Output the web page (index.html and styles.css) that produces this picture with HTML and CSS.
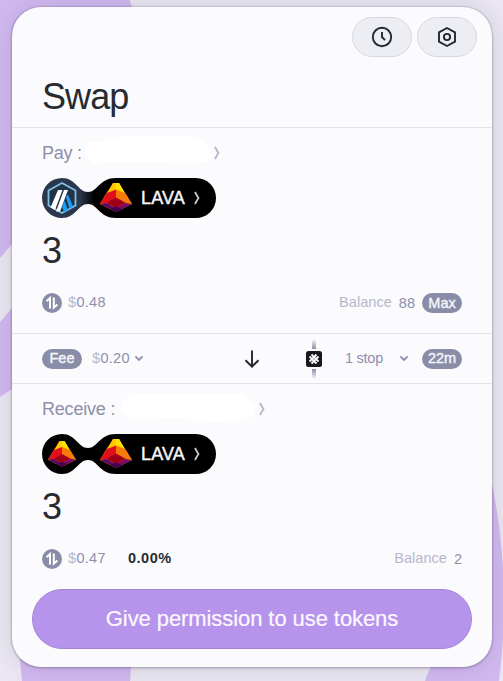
FILE: index.html
```html
<!DOCTYPE html>
<html lang="en">
<head>
<meta charset="utf-8">
<title>Swap</title>
<link rel="stylesheet" href="styles.css">
</head>
<body>
<svg class="backdrop" width="503" height="681" viewBox="0 0 503 681" aria-hidden="true">
  <path d="M0 0H130Q145 50 120 100L12 244L0 258ZM0 322L12 308L80 240V340L12 389L0 397ZM18 640Q20 660 22 681H130L133 640ZM489 470C505 540 508 610 499 681H425Q440 640 460 600Z" fill="#d2baf1"/>
</svg>
<svg width="0" height="0" class="defs" aria-hidden="true">
  <symbol id="lava" viewBox="0 0 32 29">
    <path d="M13 0H19L32 21 16 29 0 21Z" fill="#ff9a00"/>
    <path d="M13 0H19L25 11 16 7.5 7 11Z" fill="#ffc800"/>
    <path d="M15 0H19L25 11 16 7.5Z" fill="#ffe100"/>
    <path d="M8.5 7 7 11 0 21 8 7.5Z" fill="#ff6a00"/>
    <path d="M7 10 16 6.5V16L6 20 0 21Z" fill="#e2101c"/>
    <path d="M16 6.5 25 10 32 21 26 20 16 16Z" fill="#f57c0c"/>
    <path d="M16 14.5 26 20 16 25 6 20Z" fill="#a10018"/>
    <path d="M0 21 6 20 16 25V29Z" fill="#5c0864"/>
    <path d="M32 21 26 20 16 25V29Z" fill="#75096e"/>
    <path d="M16 23.5 22 26 16 29 10 26Z" fill="#45004f"/>
  </symbol>
  <symbol id="swap" viewBox="0 0 20 20">
    <circle cx="10" cy="10" r="10" fill="#8a8da8"/>
    <path d="M4.5 8.3 8 5.1V15.5M11.8 4.5V14.6L15.4 11.4" fill="none" stroke="#fff" stroke-width="2"/>
  </symbol>
  <symbol id="angle" viewBox="0 0 6 14"><path d="M1 1Q2.5 4 4.5 7Q2.5 10 1 13" fill="none" stroke="currentColor" stroke-width="1.8"/></symbol>
  <symbol id="down" viewBox="0 0 8 6"><path d="M1 1 4 4 7 1" fill="none" stroke="#8f91ad" stroke-width="1.8" stroke-linecap="round"/></symbol>
</svg>
<main class="card">
  <header class="header">
    <div class="tools">
      <button class="tool" aria-label="History"><svg width="22" height="22" viewBox="0 0 22 22"><circle cx="11" cy="11" r="9.2"/><path d="M11 6v5l3 3.2"/></svg></button>
      <button class="tool" aria-label="Settings"><svg width="22" height="22" viewBox="0 0 22 22"><path d="M11 2 19 6.3V15.7L11 20 3 15.7V6.3Z"/><circle cx="11" cy="11" r="3.1"/></svg></button>
    </div>
    <h1 class="title">Swap</h1>
  </header>

  <section class="side">
    <div class="account"><span class="pay-label">Pay :</span>
      <svg class="pay-blank" width="131" height="30" viewBox="0 0 131 30"><path d="M4 9Q9 4 19 8Q30 0 48 1H105Q119 3 124 10Q131 14 129 24Q128 28 120 26L22 27Q9 32 8 24Q0 16 4 9Z" fill="#fff"/></svg>
      <svg class="angle" width="6" height="14"><use href="#angle"/></svg></div>
    <button class="token">
      <svg class="shape" width="174" height="40" viewBox="0 0 174 40">
        <defs><linearGradient id="chain"><stop offset=".16" stop-color="#2b374c"/><stop offset=".22" stop-color="#2b374c"/><stop offset=".3" stop-color="#000"/></linearGradient></defs>
        <path d="M20 0C34 0 36 14 46 14S57 0 74 0H154A20 20 0 0 1 154 40H74C57 40 56 26 46 26S34 40 20 40A20 20 0 0 1 20 0Z" fill="url(#chain)"/>
        <path d="M20 5 33.5 12.5V27.5L20 35 6.5 27.5V12.5Z" fill="#203349" stroke="#83bfe0" stroke-width="1.8"/>
        <path d="M16 12H20.5L13 32 8.5 29.5ZM22 12H26L18 33.5H14Z" fill="#fff"/>
        <path d="M24 19 26 16.5 31 28.5 27.5 31ZM22.5 22.5 26 32 22 34 20 29Z" fill="#1b9df5"/>
        <use href="#lava" x="58" y="5" width="32" height="29"/>
      </svg>
      <span class="symbol">LAVA</span><svg class="token-angle" width="6" height="14"><use href="#angle"/></svg>
    </button>
    <div class="amount">3</div>
    <div class="stats"><svg class="swap" width="20" height="20"><use href="#swap"/></svg><span class="usd"><i>$</i>0.48</span>
      <span class="balance">Balance</span><span class="held">88</span><button class="pill">Max</button></div>
  </section>

  <section class="route">
    <span class="pill">Fee</span><span class="usd fee"><i>$</i>0.20</span><svg class="fee-down" width="8" height="6"><use href="#down"/></svg>
    <svg class="arrow" width="16" height="20" viewBox="0 0 16 20"><path d="M8 1.5V17M1.5 11.2 8 17.6 14.5 11.2" fill="none" stroke="#25272e" stroke-width="1.9"/></svg>
    <svg class="bridge" width="16" height="40" viewBox="0 0 16 40">
      <defs><linearGradient id="up" x2="0" y2="1"><stop stop-color="#8a8da8" stop-opacity="0"/><stop offset="1" stop-color="#8a8da8"/></linearGradient><linearGradient id="dn" x2="0" y2="1"><stop stop-color="#8a8da8"/><stop offset="1" stop-color="#8a8da8" stop-opacity="0"/></linearGradient></defs>
      <rect x="6" width="4" height="10" fill="url(#up)"/><rect x="6" y="30" width="4" height="10" fill="url(#dn)"/>
      <rect y="12" width="16" height="16" rx="2.5" fill="#17181b"/>
      <path d="M3.5 17.5 10.5 24.5M5.5 15.5 12.5 22.5M10.5 15.5 3.5 22.5M12.5 17.5 5.5 24.5" stroke="#fff" stroke-width="1.8"/>
    </svg>
    <span class="stops">1 stop</span><svg class="stop-down" width="8" height="6"><use href="#down"/></svg><span class="pill time">22m</span>
  </section>

  <section class="side receive">
    <div class="account"><span class="receive-label">Receive :</span>
      <svg class="receive-blank" width="139" height="30" viewBox="0 0 139 30"><path d="M3 14Q5 7 9 6Q17 0 30 2L112 2Q125 0 132 8Q139 14 136 23Q131 28 124 27Q112 31 80 29Q70 27 65 26L25 27Q16 29 10 24Q1 24 3 14Z" fill="#fff"/></svg>
      <svg class="angle" width="6" height="14"><use href="#angle"/></svg></div>
    <button class="token">
      <svg class="shape" width="174" height="40" viewBox="0 0 174 40">
        <path d="M20 0C34 0 36 14 46 14S57 0 74 0H154A20 20 0 0 1 154 40H74C57 40 56 26 46 26S34 40 20 40A20 20 0 0 1 20 0Z"/>
        <use href="#lava" x="6" y="7" width="28" height="26"/><use href="#lava" x="58" y="5" width="32" height="29"/>
      </svg>
      <span class="symbol">LAVA</span><svg class="token-angle" width="6" height="14"><use href="#angle"/></svg>
    </button>
    <div class="amount">3</div>
    <div class="stats"><svg class="swap" width="20" height="20"><use href="#swap"/></svg><span class="usd"><i>$</i>0.47</span><b class="change">0.00%</b>
      <span class="balance">Balance</span><span class="held">2</span></div>
  </section>
  <button class="submit">Give permission to use tokens</button>
</main>
</body>
</html>
```
FILE: styles.css
```css
* { box-sizing: border-box; }
body { margin: 0; width: 503px; height: 681px; padding: 7px 11px 14px 12px; overflow: hidden; background: #ebe8f3; font-family: "Liberation Sans", Arial, sans-serif; }
button { border: 0; padding: 0; margin: 0; font: inherit; background: none; }
svg { display: block; flex: none; }
.backdrop, .defs { position: absolute; left: 0; top: 0; z-index: -1; }
.card { width: 480px; height: 660px; border-radius: 29px; background: #fbfbfe; color: #272a31; box-shadow: 0 0 2px rgba(40,30,60,.3), 0 1px 3px rgba(30,20,50,.25), 0 0 28px rgba(40,30,60,.15); }
.header { height: 121px; padding: 10px 15px 0 30px; border-bottom: 1px solid #e2e2e7; }
.tools { display: flex; justify-content: flex-end; gap: 5px; }
.tool { width: 60px; height: 40px; border-radius: 20px; border: 1px solid #d8d8e0; background: #edeef3; display: grid; place-items: center; }
.tool svg { fill: none; stroke: #25272d; stroke-width: 1.9; }
.title { margin: 19px 0 0; font-size: 36px; line-height: 42px; font-weight: 400; letter-spacing: -.9px; }
.side { height: 206px; padding: 0 30px; border-bottom: 1px solid #e2e2e7; }
.receive { height: 198px; border: 0; }
.account { display: flex; align-items: center; height: 50px; font-size: 18px; color: #8d8fac; letter-spacing: -.25px; }
.pay-label { width: 40px; white-space: nowrap; }
.receive-label { width: 75px; white-space: nowrap; letter-spacing: -.2px; }
.pay-blank { margin-top: -6px; }
.receive-blank { margin: -5px 0 0 1px; }
.account .angle { color: #b4b5ca; margin-left: 1px; }
.receive .account .angle { margin-left: 2px; }
.token { position: relative; display: flex; align-items: center; width: 174px; height: 40px; padding-left: 99px; color: #f7f7fa; }
.shape { position: absolute; left: 0; top: 0; }
.symbol { position: relative; width: 45px; text-align: left; font-size: 18px; letter-spacing: .15px; -webkit-text-stroke: .4px; }
.token-angle { position: relative; margin-left: 8px; color: #c8c8cc; }
.amount { height: 42px; margin-top: 12px; font-size: 36px; line-height: 42px; }
.stats { display: flex; align-items: center; height: 20px; margin-top: 20px; font-size: 14.5px; color: #8d8fac; }
.stats .swap { margin-right: 6px; position: relative; top: .5px; }
.stats .pill { position: relative; top: 1px; }
.usd i { font-style: normal; color: #b6b7cc; }
.usd { width: 38px; white-space: nowrap; letter-spacing: .3px; }
.balance { margin-left: auto; color: #b6b7cc; letter-spacing: .05px; }
.held { margin: 2px 7px 0; }
.receive .held { margin-right: 0; }
.change { margin-left: 22px; color: #272a31; font-size: 14.5px; letter-spacing: .5px; }
.pill { width: 40px; height: 20px; border-radius: 10px; background: #8a8da8; color: #f5f5fa; font-size: 14.5px; line-height: 19px; text-align: center; -webkit-text-stroke: .4px; }
.route { display: flex; align-items: center; height: 50px; padding: 0 30px; border-bottom: 1px solid #e2e2e7; color: #8d8fac; font-size: 14.5px; }
.route .usd, .stops { position: relative; top: -1px; }
.fee { margin-left: 10px; }
.fee-down { margin-left: 5px; }
.arrow { margin-left: 101px; }
.bridge { margin-left: 46px; }
.stops { width: 38px; margin-left: 23px; white-space: nowrap; letter-spacing: -.25px; }
.stop-down { margin-left: 17px; }
.time { margin-left: auto; }
.submit { display: block; width: 440px; height: 60px; margin: 7px auto 0; border-radius: 30px; border: 1px solid #a584d9; background: #b794eb; color: #fbf8ff; font-size: 22px; letter-spacing: -.08px; -webkit-text-stroke: .2px; }
```
